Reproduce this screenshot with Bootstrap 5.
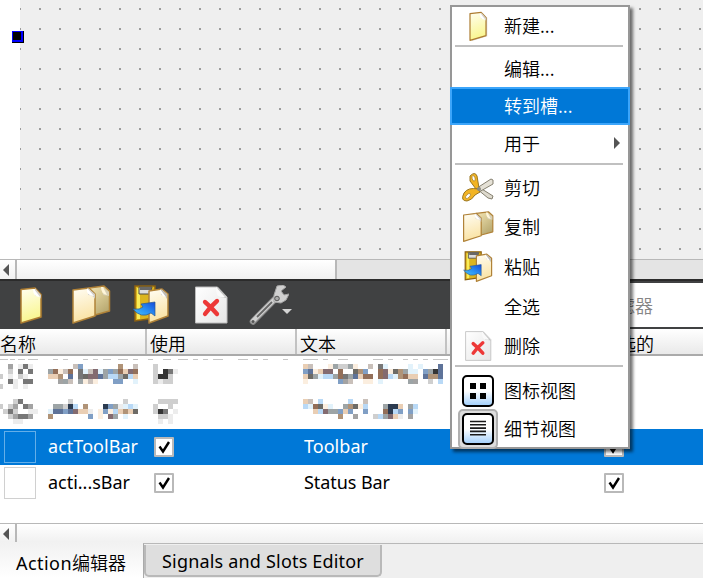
<!DOCTYPE html>
<html lang="zh-CN">
<head>
<meta charset="utf-8">
<title>Action编辑器</title>
<link href="https://cdn.jsdelivr.net/npm/bootstrap@5.3.0/dist/css/bootstrap.min.css" rel="stylesheet">
<style>
body{width:703px;height:578px;overflow:hidden;background:#fff;color:#000;font:18px/24px "Noto Sans","Noto Sans CJK SC",sans-serif}
.cjk{font-family:"Noto Sans CJK SC",sans-serif;font-weight:350}
.window{width:703px;height:578px}
.canvas{height:259px;padding-left:20px}
.dots{background:#efefef;overflow:hidden}
.handle{left:12px;top:31px;width:12px;height:12px;background:#000}
.scroll{height:20px;border-top:1px solid #b8b8b8;background:linear-gradient(#fff,#f0f0f0)}
.scroll .arrow{width:17px;border-right:2px solid #b8b8b8;padding-left:3px}
.scroll .thumb{width:320px;border-right:2px solid #b8b8b8}
.scroll .track{background:#e4e4e4}
.tools{height:50px;background:#404142;border-top:2px solid #2b2b2b;padding-left:11px}
.tools svg{width:40px;height:40px;flex:none;margin-right:20px}
.tools .wrench{margin:0 0 0 -2px}
.tools .caret{width:10px;height:6px;margin:14px 0 0 -7px}
.filter{width:113px;height:44px;background:#fff;color:#858585;padding-left:9px}
.cells{display:grid;grid-template-columns:147px 150px 150px 150px 106px;flex:none}
.heads{height:27px;background:linear-gradient(#fff,#e9e9e9);border-bottom:2px solid #aaa}
.heads>div{height:25px;border-right:2px solid #c2c2c2;padding-left:3px;line-height:29px}
.heads>div:first-child{padding-left:0}
.line{height:36px}
.line>div{display:flex;align-items:center}
.fit{display:inline-block;position:relative;top:-1px;white-space:nowrap}
.tabs .fit{top:0}
.picked{background:#0078d7;color:#fff}
.thumbbox{width:32px;height:32px;border:1px solid #d0d0d0;margin:0 12px 0 4px}
.picked .thumbbox{border-color:#64aee8}
.tick{width:20px;height:20px;border:2px solid #b9b9b9;border-radius:1px;background:#fff;margin-left:7px;display:flex}
.txt{padding-left:7px}
.tabs{height:35px;background:#efefef}
.tab-on{width:143px;padding:8px 0 0 16px;background:linear-gradient(#f1f1f1,#fff);margin-top:-1px;white-space:nowrap}
.rest{border-top:1px solid #b8b8b8;border-left:1px solid #aaa}
.tab-off{width:238px;height:32px;margin:1px 0 0 0;border:2px solid #b9b9b9;border-top:0;border-radius:0 0 5px 5px;background:#dedede;padding:4px 0 0 16px;white-space:nowrap}
.popup{left:450px;top:5px;width:180px;height:444px;background:#fff;border:2px solid #979797;box-shadow:3px 3px 3px rgba(0,0,0,.55)}
.popup .entry{height:40px;padding-left:10px;padding-bottom:2px;flex:none;white-space:nowrap}
.popup .entry svg{width:32px;height:32px;margin:2px 10px 0 0}
.popup .entry .gap{width:42px}
.popup .entry .sub{width:6px;height:12px;margin:0 8px 0 auto}
.popup .h37{height:37px}.popup .h38{height:38px}.popup .h39{height:39px}.popup .h42{height:42px}.popup .h43{height:43px}
.popup .rule{height:2px;background:#c0c0c0;margin:0 5px 0 3px;flex:none}
.popup .active-entry{height:38px;margin:0 -2px;border:2px solid #3ca5fa;background:#0078d7;color:#fff}
.over{overflow:visible}
</style>
<script src="https://cdn.jsdelivr.net/npm/bootstrap@5.3.0/dist/js/bootstrap.bundle.min.js"></script>
</head>
<body>
<svg width="0" height="0" class="position-absolute">
<defs>
<linearGradient id="gy" x1="0" y1="0" x2=".2" y2="1"><stop stop-color="#fffef0"/><stop offset="1" stop-color="#f9f68e"/></linearGradient>
<linearGradient id="gt" x1="0" y1="0" x2=".2" y2="1"><stop stop-color="#fffdf4"/><stop offset="1" stop-color="#fae3a4"/></linearGradient>
<linearGradient id="gk" x1="0" y1="0" x2=".6" y2="1"><stop stop-color="#f4e6b4"/><stop offset="1" stop-color="#b9aa72"/></linearGradient>
<linearGradient id="gb" x1="0" y1="1" x2="1" y2="0"><stop stop-color="#4ec5f4"/><stop offset=".5" stop-color="#2890f4"/><stop offset="1" stop-color="#1649d8"/></linearGradient>
<linearGradient id="gv" x1="0" y1="0" x2="0" y2="1"><stop offset=".5" stop-color="#fff"/><stop offset="1" stop-color="#9fcefb"/></linearGradient>
<linearGradient id="gw" x1="0" y1="0" x2="1" y2="1"><stop stop-color="#fff"/><stop offset="1" stop-color="#e6e6e6"/></linearGradient>
<pattern id="grid" width="20" height="20" patternUnits="userSpaceOnUse" x="-1" y="8"><rect width="2" height="2" fill="#9d9d9d"/></pattern>
<symbol id="new" viewBox="0 0 40 40"><path d="M10.500 4.500 24 3l6 6v23l-19.500 6z" fill="#6b5b35" opacity=".3" transform="translate(1.500 .8)"/><path d="M10 4.500 24 3l6 6.500V32l-20 6z" fill="url(#gy)" stroke="#ad7c31" stroke-width="1.500" stroke-linejoin="round"/><path d="m24 3 6 7v4c-1-3-3-4-6-3.500z" fill="#d4d0c8"/><path d="M22 4q0 8 7 8l-6-8z" fill="#fff"/></symbol>
<symbol id="copy" viewBox="0 0 40 40"><path d="m18 3 15-2 5.500 5v20L24 30z" fill="url(#gk)" stroke="#b08238" stroke-width="1.500" stroke-linejoin="round"/><path d="m31 2 7 5v4l-6-1z" fill="#d6cfb6"/><path d="M30 2q0 7 6 8l-4-8z" fill="#fff6da"/><path d="m2 5 16-2 6 6v22L2 38z" fill="url(#gt)" stroke="#b08238" stroke-width="1.500" stroke-linejoin="round"/><path d="m17 3 7 6v5q-2-4-7-4z" fill="#d1cec8"/><path d="M16 3q-1 8 7 8z" fill="#fff"/></symbol>
<symbol id="paste" viewBox="0 0 40 40"><path d="M4 1h20v32L4 36z" fill="#dcb51f" stroke="#8d6112" stroke-width="1.500"/><path d="M6 3h3v31H6z" fill="#f9ec59"/><path d="M8 2h13l-2 7H8z" fill="#ddd" stroke="#4c4a43"/><path d="M9 2h11v3H9z" fill="#686868"/><path d="m18 6 13-2 6 5v22l-19 7z" fill="url(#gt)" stroke="#b08238" stroke-width="1.500" stroke-linejoin="round"/><path d="m30 4 6 5v5q-2-4-6-4z" fill="#bcb9b2"/><path d="M29 4q0 7 6 8z" fill="#fff"/><path d="M2 24q7 1 10-2l-2-3 14-2v14l-4-3Q10 34 2 24z" fill="url(#gb)" stroke="#28578f" stroke-width=".7"/></symbol>
<symbol id="delete" viewBox="0 0 40 40"><path d="M4.500 2h22L36 12v26H4.500z" fill="url(#gw)" stroke="#bdbdbd"/><path d="m26 2 10 11-7-1z" fill="#bcbcbc"/><path d="M25 2q-1 12 9 10z" fill="#fafafa"/><path d="M14 17q6 5 12 12M26 16q-7 6-12 13" fill="none" stroke="#ed3837" stroke-width="4.300" stroke-linecap="round"/></symbol>
<symbol id="wrench" viewBox="0 0 40 40"><path d="M4 36.500 27 13" stroke="#8c8c8c" stroke-width="6.500" stroke-linecap="round"/><path d="M4 36 27 13" stroke="#d0d0d0" stroke-width="4.500" stroke-linecap="round"/><path d="m8 32 15-15" stroke="#666" stroke-width="1.800"/><path d="M25 10 28 1l6-1 3 2-5 4 3 4 5-1-3 6-5 3-7-1z" fill="#d0d0d0" stroke="#a5a5a5"/><circle cx="28" cy="13.500" r="2.300" fill="#aaa" stroke="#555"/><circle cx="4" cy="36.500" r="1.600" fill="#555"/></symbol>
<symbol id="cut" viewBox="0 0 32 32"><path d="m15 14 16 10-1 3-4-1-11-9z" fill="#ddd9cd" stroke="#858070"/><path d="M15 16 29 7l2 1v4l-14 8z" fill="#e5e1d6" stroke="#858070"/><path d="M8 4q5-5 7 0l2 12-3 1-6-8z" fill="#f2b424" stroke="#9a7622"/><ellipse cx="11.500" cy="6.500" rx="1.500" ry="2.800" fill="#fff" stroke="#a67d20" stroke-width=".7" transform="rotate(-15 11 6)"/><path d="M16 17Q6 15 2 21q-4 8 3 8 5-1 8-6l5-3z" fill="#f2b424" stroke="#9a7622"/><ellipse cx="6" cy="24" rx="1.600" ry="3.200" fill="#fff" stroke="#a67d20" stroke-width=".7" transform="rotate(45 6 24)"/><circle cx="17" cy="17" r="2" fill="#8c8b84"/></symbol>
<symbol id="icons" viewBox="0 0 32 32"><rect x="1" y="1" width="30" height="30" rx="4" fill="url(#gv)" stroke="#000" stroke-width="2"/><path d="M8 8h6v6H8zM18 8h6v6h-6zM8 18h6v6H8zM18 18h6v6h-6z"/></symbol>
<symbol id="details" viewBox="0 0 32 32"><rect x="1" y="1" width="30" height="30" rx="4" fill="url(#gv)" stroke="#000" stroke-width="2"/><path d="M8 8.500h16M8 11.800h16M8 15.100h16M8 18.400h16M8 21.700h16" stroke="#1a1a1a" stroke-width="1.600"/></symbol>
<symbol id="check" viewBox="0 0 16 16"><path d="M3.500 7.500 7 12.500 13 3" fill="none" stroke="#000" stroke-width="2.400"/></symbol>
</defs>
</svg>
<div class="window position-relative d-flex flex-column overflow-hidden">
  <div class="canvas position-relative d-flex flex-shrink-0">
    <div class="dots flex-grow-1"><svg width="683" height="259" class="d-block"><rect width="683" height="259" fill="url(#grid)"/></svg></div>
    <svg class="handle position-absolute" viewBox="0 0 12 12"><path d="M0 0h11v11H0z" fill="#00f"/><path d="M1 1h8v8H1z"/></svg>
  </div>
  <div class="scroll d-flex flex-shrink-0">
    <div class="arrow d-flex align-items-center"><svg width="7" height="12"><path d="M6 0v12L0 6z" fill="#555"/></svg></div><div class="thumb"></div><div class="track flex-grow-1"></div>
  </div>
  <div class="tools d-flex align-items-center flex-shrink-0">
    <svg><use href="#new"/></svg><svg><use href="#copy"/></svg><svg><use href="#paste"/></svg><svg><use href="#delete"/></svg><svg class="wrench over"><use href="#wrench"/></svg>
    <svg class="caret"><path d="M0 0h10L5 5z" fill="#d4d4d4"/></svg>
    <div class="filter cjk ms-auto d-flex align-items-center">过滤器</div>
  </div>
  <div class="cells heads cjk"><div>名称</div><div>使用</div><div>文本</div><div>快捷键</div><div class="border-0">可选的</div></div>
  <svg id="mosaic" class="d-block flex-shrink-0" width="703" height="73" shape-rendering="crispEdges"></svg>
  <div class="cells line picked">
    <div><span class="thumbbox"></span><span class="fit" data-w="90">actToolBar</span></div><div><span class="tick"><svg width="16" height="16"><use href="#check"/></svg></span></div><div class="txt"><span class="fit" data-w="64">Toolbar</span></div><div></div><div><span class="tick"><svg width="16" height="16"><use href="#check"/></svg></span></div>
  </div>
  <div class="cells line">
    <div><span class="thumbbox"></span><span class="fit" data-w="82">acti...sBar</span></div><div><span class="tick"><svg width="16" height="16"><use href="#check"/></svg></span></div><div class="txt"><span class="fit" data-w="86">Status Bar</span></div><div></div><div><span class="tick"><svg width="16" height="16"><use href="#check"/></svg></span></div>
  </div>
  <div class="flex-grow-1"></div>
  <div class="scroll d-flex flex-shrink-0">
    <div class="arrow d-flex align-items-center"><svg width="7" height="12"><path d="M6 0v12L0 6z" fill="#555"/></svg></div>
  </div>
  <div class="tabs d-flex flex-shrink-0">
    <div class="tab-on"><span class="fit" data-w="56">Action</span><span class="cjk">编辑器</span></div>
    <div class="rest flex-grow-1"><div class="tab-off"><span class="fit" data-w="202">Signals and Slots Editor</span></div></div>
  </div>
  <div class="popup position-absolute d-flex flex-column cjk">
    <div class="entry h38 d-flex align-items-center"><svg><use href="#new"/></svg>新建...</div>
    <div class="rule"></div>
    <div class="entry d-flex align-items-center pt-1"><span class="gap"></span>编辑...</div>
    <div class="entry active-entry d-flex align-items-center"><span class="gap"></span>转到槽...</div>
    <div class="entry h38 d-flex align-items-center"><span class="gap"></span>用于<svg class="sub"><path d="M0 0v12l6-6z" fill="#555"/></svg></div>
    <div class="rule"></div>
    <div class="entry h42 d-flex align-items-center pt-1"><svg><use href="#cut"/></svg>剪切</div>
    <div class="entry d-flex align-items-center"><svg><use href="#copy"/></svg>复制</div>
    <div class="entry d-flex align-items-center"><svg><use href="#paste"/></svg>粘贴</div>
    <div class="entry h39 d-flex align-items-center"><span class="gap"></span>全选</div>
    <div class="entry h39 d-flex align-items-center"><svg><use href="#delete"/></svg>删除</div>
    <div class="rule"></div>
    <div class="entry h43 d-flex align-items-center pt-1"><svg><use href="#icons"/></svg>图标视图</div>
    <div class="entry h37 d-flex align-items-center"><svg class="over"><rect x="-3" y="-3" width="38" height="38" rx="4" fill="#dedede" stroke="#b0b0b0" stroke-width="2"/><use href="#details"/></svg>细节视图</div>
  </div>
</div>
<script>
document.querySelectorAll('.fit').forEach(e=>{
  const w=e.getBoundingClientRect().width;
  e.style.letterSpacing=((+e.dataset.w-w)/e.textContent.length)+'px';
});
// Blocks that hide the first two rows, five pixels each
const pal={a:'#777',b:'#a3a3a3',c:'#cfcfcf',d:'#ececec',k:'#353535',B:'#936f59',T:'#e9ceb4',L:'#b9d9f6',S:'#5e7399',M:'#809fc5',U:'#836b70',W:'#fbeedf',P:'#e2f2fb',G:'#6d6b66',N:'#b09377',C:'#c9c0ba',E:'#9da4a6',D:'#2c3b50'};
const blocks=[
 [3,8,['.b.dad','.c.a.a','.d.cd.','.ad.aa','..d.d.']],
 [3,43,['..ca..','.cb.ab','cac..dd','.cbaab','..dd..']],
 [48,8,['.....CM.......N..C','EBWCB.aPCUPEMEBTUB','TTN.S.aGUUSELLEGLT','..bEC.EWCW...MM..P']],
 [48,43,['....c..........c..','.EEcDL.N...DMEdPLP','PSSMSUTTd.WMWLTNTG','N.......M.W.UE.P..']],
 [153,8,['c....','c.kad','ckkc.','cdcc.']],
 [153,43,['.cccc','c..c.','cka.d','.ccd.','.d.d.']],
 [303,8,['TC...WEccEW..C.aP....P.P...S','MSWTUU.B..GNM..BUWGNEPP.MEkS','TGEPLLEBaESTBB.BULPNBTT.SNNS','W......MbC..WW.P.....Eb..c.L']],
 [303,43,['TC.L.....L..C','LPBGWP..ENGWL...EDDT.EL','..TLUEEMTM..M...BDLM.MP','.......N..b...cLEUTd.b']]
];
let out='';
for(const [x,y,rows] of blocks) rows.forEach((r,j)=>{[...r].forEach((ch,i)=>{if(pal[ch])out+=`<rect x="${x+5*i}" y="${y+5*j}" width="5" height="5" fill="${pal[ch]}"/>`})});
for(const [x,w] of [[0,8],[10,5],[18,7],[28,10],[53,5],[63,5],[83,5],[93,5],[103,8],[118,10],[133,5],[148,5],[163,8],[178,10],[193,5],[203,5],[213,10],[238,10],[253,5],[263,5],[283,5],[303,15],[323,5],[338,10],[373,10],[388,5],[403,5],[413,5],[423,5],[433,15]])
  out+=`<rect x="${x}" y="3" width="${w}" height="1" fill="#c6c6c6"/>`;
out+='<rect x="0" y="18" width="3" height="5" fill="#ccc"/><rect x="0" y="28" width="3" height="5" fill="#ccc"/><rect x="0" y="48" width="3" height="5" fill="#ccc"/>';
document.getElementById('mosaic').innerHTML=out;
</script>
</body>
</html>
